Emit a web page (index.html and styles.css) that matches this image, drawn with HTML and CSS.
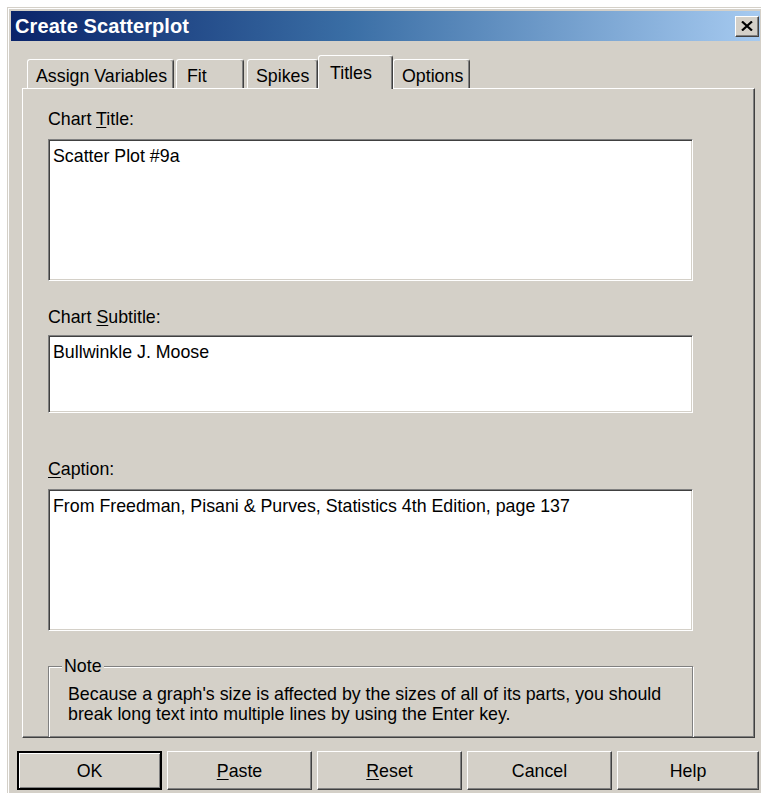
FILE: index.html
```html
<!DOCTYPE html>
<html lang="en">
<head>
<meta charset="utf-8">
<title>Create Scatterplot</title>
<link rel="stylesheet" href="styles.css">
</head>
<body>
<div class="window">
  <div class="titlebar">
    <span class="title">Create Scatterplot</span>
    <span class="close-btn">
      <svg width="12" height="10" viewBox="0 0 12 10"><path d="M1 0.5 L11 9.5 M11 0.5 L1 9.5" stroke="#000" stroke-width="2.2" fill="none"/></svg>
    </span>
  </div>
  <div class="client">
    <div class="tabs">
      <div class="tab tab-assign">Assign Variables</div>
      <div class="tab tab-fit">Fit</div>
      <div class="tab tab-spikes">Spikes</div>
      <div class="tab tab-titles is-active">Titles</div>
      <div class="tab tab-options">Options</div>
    </div>
    <div class="panel">
      <div class="label label-title">Chart <u>T</u>itle:</div>
      <div class="textbox textbox-tall">Scatter Plot #9a</div>

      <div class="label label-subtitle">Chart <u>S</u>ubtitle:</div>
      <div class="textbox textbox-short">Bullwinkle J. Moose</div>

      <div class="label label-caption"><u>C</u>aption:</div>
      <div class="textbox textbox-tall">From Freedman, Pisani &amp; Purves, Statistics 4th Edition, page 137</div>

      <div class="group">
        <span class="legend">Note</span>
        <p class="note">Because a graph's size is affected by the sizes of all of its parts, you should<br>break long text into multiple lines by using the Enter key.</p>
      </div>
    </div>
    <div class="buttons">
      <div class="btn btn-default">OK</div>
      <div class="btn"><u>P</u>aste</div>
      <div class="btn"><u>R</u>eset</div>
      <div class="btn">Cancel</div>
      <div class="btn">Help</div>
    </div>
  </div>
</div>
</body>
</html>
```

FILE: styles.css
```css
* { box-sizing: border-box; }

html, body {
  margin: 0;
  background: #ffffff;
  overflow: hidden;
}

body {
  font-family: "Liberation Sans", Arial, sans-serif;
  font-size: 17.8px;
  color: #000;
}

u { text-decoration: underline; text-underline-offset: 2px; }

/* outer dialog frame */
.window {
  margin: 7px 0 0 7px;
  width: 757px;
  height: 800px;
  background: #d4d0c8;
  border: 1px solid #d4d0c8;
  border-right-color: #404040;
  box-shadow: inset 1px 1px 0 #ffffff;
  padding: 3px;
}

/* caption bar */
.titlebar {
  height: 30px;
  background: linear-gradient(to right, #0a246a 0%, #3a6ea5 45%, #a6caf0 100%);
  display: flex;
  align-items: center;
  justify-content: space-between;
  padding-left: 4px;
}

.title {
  color: #ffffff;
  font-weight: bold;
  font-size: 20px;
  line-height: 30px;
  letter-spacing: 0.1px;
}

.close-btn {
  width: 24px;
  height: 21px;
  margin-right: 1px;
  background: #d4d0c8;
  border: 1px solid;
  border-color: #ffffff #404040 #404040 #ffffff;
  box-shadow: inset -1px -1px 0 #808080;
  display: flex;
  align-items: center;
  justify-content: center;
}

/* dialog body */
.client {
  padding: 14px 0 0 0;
}

.tabs {
  display: flex;
  align-items: flex-end;
  height: 33px;
  margin-left: 11px;
  padding-left: 5px;
  position: relative;
  z-index: 1;
}

.tab {
  height: 29px;
  padding: 6px 0 0 8px;
  line-height: 20px;
  background: #d4d0c8;
  border-top: 1px solid #ffffff;
  border-left: 1px solid #ffffff;
  border-right: 1px solid #404040;
  box-shadow: inset -1px 0 0 #808080;
  border-radius: 3px 3px 0 0;
  white-space: nowrap;
}

.tab-assign { width: 147px; }
.tab-fit { width: 68px; margin-left: 2px; padding-left: 10px; }
.tab-spikes { width: 71px; margin-left: 3px; }
.tab-titles { width: 75px; }
.tab-options { width: 77px; }

.tab.is-active {
  height: 34px;
  margin-bottom: -1px;
  padding-top: 7px;
  padding-left: 11px;
}

.panel {
  margin-left: 11px;
  width: 733px;
  height: 650px;
  border: 1px solid;
  border-color: #ffffff #404040 #404040 #ffffff;
  box-shadow: inset -1px -1px 0 #808080;
  padding: 20px 0 0 25px;
  overflow: hidden;
  display: flex;
  flex-direction: column;
  align-items: flex-start;
}

.panel > * { flex-shrink: 0; }

.label {
  line-height: 20px;
  white-space: nowrap;
}

.label-title { margin-bottom: 10px; }
.label-subtitle { margin-top: 26px; margin-bottom: 8px; }
.label-caption { margin-top: 46px; margin-bottom: 10px; }

.textbox {
  width: 645px;
  background: #ffffff;
  border: 1px solid;
  border-color: #808080 #ffffff #ffffff #808080;
  box-shadow: inset 1px 1px 0 #404040, inset -1px -1px 0 #d4d0c8;
  padding: 6px 4px 4px;
  line-height: 20px;
  white-space: nowrap;
}

.textbox-tall { height: 142px; }
.textbox-short { height: 78px; }

/* etched group frame */
.group {
  position: relative;
  margin-top: 35px;
  width: 645px;
  height: 90px;
  border: 1px solid #808080;
  box-shadow: inset 1px 1px 0 #ffffff, 1px 1px 0 #ffffff;
  padding: 17px 0 0 19px;
}

.legend {
  position: absolute;
  top: -11px;
  left: 13px;
  padding: 0 2px;
  background: #d4d0c8;
  line-height: 20px;
}

.note {
  margin: 0;
  line-height: 20px;
  white-space: nowrap;
}

/* command buttons */
.buttons {
  display: grid;
  grid-template-columns: repeat(4, 145px) 1fr;
  gap: 5px;
  margin-top: 13px;
  padding: 0 1px 0 6px;
}

.btn {
  height: 39px;
  background: #d4d0c8;
  border: 1px solid;
  border-color: #ffffff #404040 #404040 #ffffff;
  box-shadow: inset -1px -1px 0 #808080;
  display: flex;
  align-items: center;
  justify-content: center;
  line-height: 20px;
}

.btn-default {
  border: 2px solid #000000;
  box-shadow: inset 1px 1px 0 #ffffff, inset -1px -1px 0 #808080;
}
```
